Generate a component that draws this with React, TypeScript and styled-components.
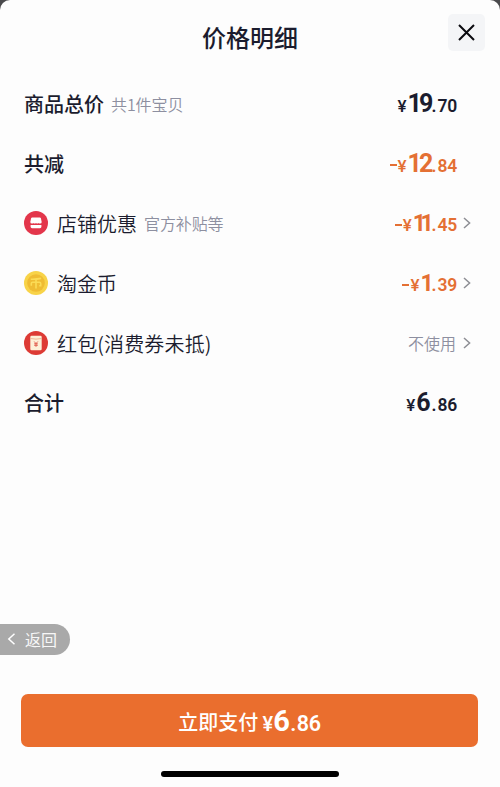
import styled, { createGlobalStyle } from "styled-components";

// Styled
const GlobalStyle = createGlobalStyle`
  * {
    box-sizing: border-box;
  }
  body {
    margin: 0;
    background: #4a4a4c;
    font-family: "Noto Sans CJK SC", sans-serif;
    color: #1b1c2e;
  }
`;
const Sheet = styled.main`
  position: relative;
  display: flex;
  flex-direction: column;
  width: 500px;
  height: 787px;
  border-radius: 10px 10px 0 0;
  background: #fdfdfd;
  overflow: hidden;
`;
const Header = styled.header`
  display: flex;
  justify-content: center;
  height: 74px;
  padding-top: 19px;
`;
const Title = styled.h1`
  margin: 0;
  font-size: 24px;
  font-weight: 500;
  line-height: 36px;
`;
const CloseButton = styled.button`
  position: absolute;
  top: 14px;
  right: 15px;
  display: flex;
  align-items: center;
  justify-content: center;
  width: 37px;
  height: 37px;
  padding: 0;
  border: 0;
  border-radius: 5px;
  background: #f4f5f7;
`;
const List = styled.ul`
  flex: 1;
  margin: 0;
  padding: 0 29px 0 24px;
  list-style: none;
`;
const Row = styled.li`
  display: flex;
  align-items: center;
  height: 59.8px;
`;
const RowIcon = styled.svg`
  width: 24px;
  height: 24px;
  margin-right: 9px;
`;
const Label = styled.span<{ $strong?: boolean; $spacing?: number }>`
  padding-top: 1px;
  font-size: 20px;
  font-weight: ${({ $strong }) => ($strong ? 500 : 350)};
  line-height: 30px;
  letter-spacing: ${({ $spacing = 0 }) => $spacing}px;
`;
const Hint = styled.span`
  margin-left: 7px;
  font-size: 16px;
  font-weight: 350;
  line-height: 24px;
  letter-spacing: -0.1px;
  color: #8d8fa0;
`;
const Value = styled.div`
  display: flex;
  align-items: center;
  justify-content: flex-end;
  margin-left: auto;
`;
const Arrow = styled.span`
  display: flex;
  justify-content: flex-end;
  width: 14px;
`;
const Unused = styled.span`
  padding-right: 1px;
  font-size: 16px;
  font-weight: 350;
  color: #8d8fa0;
`;
const Amount = styled.span<{ $orange?: boolean }>`
  display: flex;
  align-items: baseline;
  padding-top: 3px;
  font-family: Roboto, sans-serif;
  font-size: 17.5px;
  font-weight: 600;
  line-height: 30px;
  color: ${({ $orange }) => ($orange ? "#e47034" : "inherit")};
`;
const Minus = styled.i`
  width: 7px;
  height: 2px;
  margin-right: 1px;
  align-self: center;
  background: currentColor;
`;
const Yen = styled.span`
  width: 10px;
  font-size: 17px;
  font-weight: 500;
  letter-spacing: -1px;
`;
const Whole = styled.span<{ $size: number; $spacing: number }>`
  margin-right: ${({ $spacing }) => Math.max(0, -3 - $spacing)}px;
  font-size: ${({ $size }) => $size}px;
  font-weight: 700;
  letter-spacing: ${({ $spacing }) => $spacing}px;
`;
const Dot = styled.span`
  width: 7px;
  text-align: center;
`;
const Cents = styled.span`
  letter-spacing: -0.3px;
`;
const BackButton = styled.button`
  position: absolute;
  top: 624px;
  left: 0;
  display: flex;
  align-items: center;
  gap: 9px;
  width: 70px;
  height: 31px;
  padding: 0 0 1px 7px;
  border: 0;
  border-radius: 0 16px 16px 0;
  background: #a9a9a9;
  font-family: inherit;
  font-size: 16px;
  color: #f7f7f7;
`;
const Footer = styled.footer`
  display: flex;
  flex-direction: column;
  align-items: center;
  height: 93px;
`;
const PayButton = styled.button`
  display: flex;
  align-items: center;
  justify-content: center;
  gap: 3px;
  width: 457px;
  height: 53px;
  margin-right: 1px;
  padding: 2px 0 0;
  border: 0;
  border-radius: 7px;
  background: #ea6e2e;
  font-family: inherit;
  font-size: 20px;
  font-weight: 500;
  color: #fff;

  ${Amount} {
    padding-top: 1px;
    font-size: 21.5px;
  }
  ${Yen} {
    width: 12px;
    font-size: 20px;
  }
`;
const HomeBar = styled.div`
  width: 178px;
  height: 6px;
  margin-top: 24px;
  border-radius: 3px;
  background: #000;
`;

// Types
interface PriceProps {
  whole: string;
  cents: string;
  minus?: boolean;
  size?: number;
  spacing?: number;
}

const Price = ({ whole, cents, minus, size = 25, spacing = -2.8 }: PriceProps) => (
  <Amount $orange={minus}>
    {minus && <Minus />}
    <Yen>¥</Yen>
    <Whole $size={size} $spacing={spacing}>
      {whole}
    </Whole>
    <Dot>.</Dot>
    <Cents>{cents}</Cents>
  </Amount>
);

const Chevron = () => (
  <Arrow>
    <svg width="8" height="12" viewBox="0 0 8 12" fill="none">
      <path d="M1 1l5.6 5L1 11" stroke="#8d8e94" strokeWidth="1.5" />
    </svg>
  </Arrow>
);

const ShopIcon = () => (
  <RowIcon viewBox="0 0 24 24">
    <circle cx="12" cy="12" r="12" fill="#e3364b" />
    <path
      d="M8.2 6.5h7.600q.9 0 1.100.8l.8 3.800q0 1.500-1.600 1.500-1 0-1.400-.7-.5.7-1.300.7T12 11.900q-.5.7-1.400.7t-1.300-.7q-.4.7-1.400.7-1.600 0-1.600-1.500l.8-3.800q.2-.8 1.100-.8z"
      fill="#fff"
    />
    <path d="M6.600 14.100h10.800v1.700q0 1.400-1.400 1.400H8q-1.400 0-1.400-1.400z" fill="#fff" />
  </RowIcon>
);

const CoinIcon = () => (
  <RowIcon viewBox="0 0 24 24" fill="none">
    <circle cx="12" cy="12" r="12" fill="#f8d348" />
    <circle cx="12" cy="12" r="8.800" fill="#efbc33" />
    <path
      d="M6.800 8.200q5.200.2 10.400-.8M7.300 14.800v-2.300q0-1.300 1.300-1.300h6.800q1.300 0 1.300 1.300v2.300h-1.500M12 8.200v9.300"
      stroke="#fbdb55"
      strokeWidth="1.600"
    />
  </RowIcon>
);

const PacketIcon = () => (
  <RowIcon viewBox="0 0 24 24" fill="none">
    <circle cx="12" cy="12" r="12" fill="#dd3b35" />
    <rect x="6.300" y="4.700" width="11.400" height="14.500" rx="1.300" fill="#fdf0d8" />
    <path d="M6.300 7.500q5.700 1.300 11.400 0" stroke="#eeb08d" strokeWidth=".9" />
    <path
      d="M10.200 10.500l1.800 2.100 1.800-2.100M12 12.500v3.400M10.100 12.800h3.800M10.100 14.300h3.800"
      stroke="#dd4a3c"
      strokeWidth=".8"
    />
  </RowIcon>
);

const App = () => (
  <>
    <GlobalStyle />
    <Sheet>
      <Header>
        <Title>价格明细</Title>
        <CloseButton aria-label="关闭">
          <svg width="17" height="17" viewBox="0 0 17 17" fill="none">
            <path d="M1 1l15 15M16 1L1 16" stroke="#0b0b10" strokeWidth="2" />
          </svg>
        </CloseButton>
      </Header>
      <List>
        <Row>
          <Label $strong>商品总价</Label>
          <Hint>共1件宝贝</Hint>
          <Value>
            <Price whole="19" cents="70" />
            <Arrow />
          </Value>
        </Row>
        <Row>
          <Label $strong>共减</Label>
          <Value>
            <Price minus whole="12" cents="84" />
            <Arrow />
          </Value>
        </Row>
        <Row>
          <ShopIcon />
          <Label>店铺优惠</Label>
          <Hint>官方补贴等</Hint>
          <Value>
            <Price minus whole="11" cents="45" size={23} spacing={-5.5} />
            <Chevron />
          </Value>
        </Row>
        <Row>
          <CoinIcon />
          <Label>淘金币</Label>
          <Value>
            <Price minus whole="1" cents="39" size={23} spacing={-3} />
            <Chevron />
          </Value>
        </Row>
        <Row>
          <PacketIcon />
          <Label $spacing={0.15}>红包(消费券未抵)</Label>
          <Value>
            <Unused>不使用</Unused>
            <Chevron />
          </Value>
        </Row>
        <Row>
          <Label $strong>合计</Label>
          <Value>
            <Price whole="6" cents="86" spacing={0} />
            <Arrow />
          </Value>
        </Row>
      </List>
      <BackButton>
        <svg width="9" height="12" viewBox="0 0 9 12" fill="none">
          <path d="M7.500 .8L1.800 6l5.700 5.200" stroke="#fff" strokeWidth="1.500" />
        </svg>
        返回
      </BackButton>
      <Footer>
        <PayButton>
          立即支付
          <Price whole="6" cents="86" size={29} spacing={0} />
        </PayButton>
        <HomeBar />
      </Footer>
    </Sheet>
  </>
);

export default App;
